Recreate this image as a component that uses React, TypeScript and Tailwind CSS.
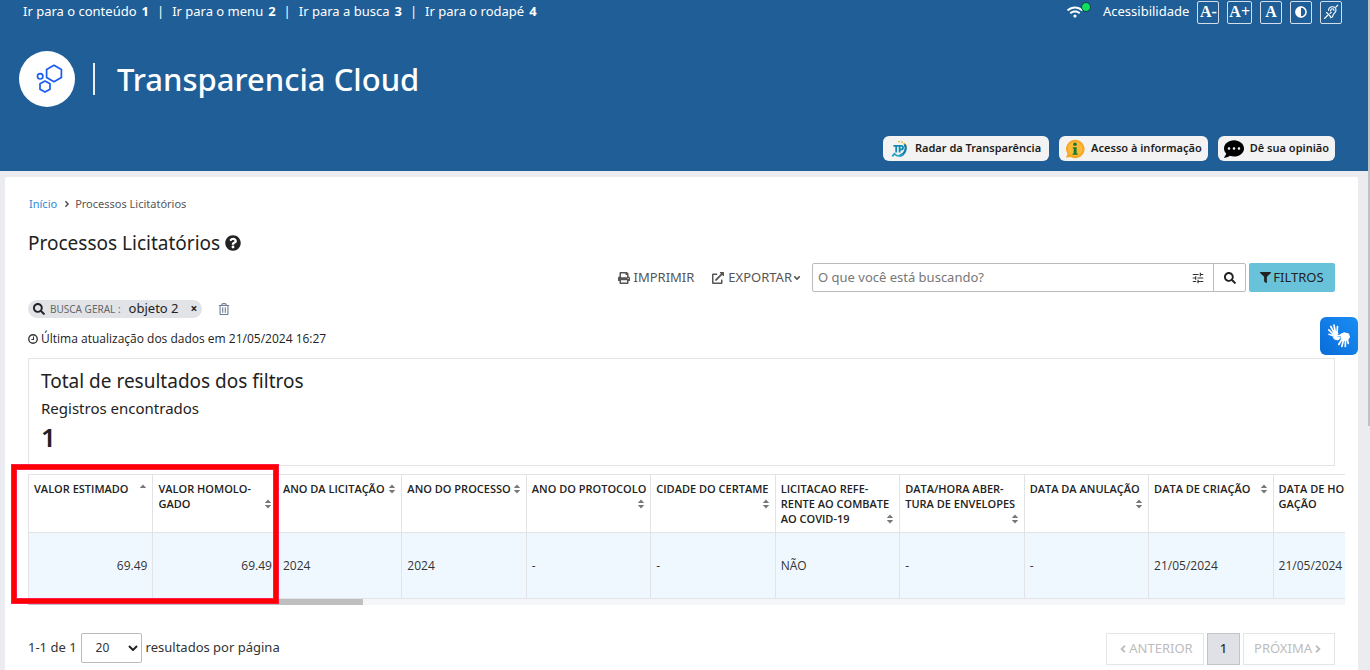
import {
  FaAdjust,
  FaAngleDown,
  FaAngleLeft,
  FaAngleRight,
  FaCommentDots,
  FaExternalLinkAlt,
  FaFilter,
  FaPrint,
  FaQuestionCircle,
  FaRegTrashAlt,
  FaSearch,
  FaWifi,
} from 'react-icons/fa'
import { MdTune } from 'react-icons/md'

const SKIP_LINKS = [
  { key: '1', label: 'Ir para o conteúdo' },
  { key: '2', label: 'Ir para o menu' },
  { key: '3', label: 'Ir para a busca' },
  { key: '4', label: 'Ir para o rodapé' },
]

type Column = { lines: string[]; value: string; numeric?: boolean; sorted?: boolean }

// an empty last line pushes the sort arrows below the label
const COLUMNS: Column[] = [
  { lines: ['VALOR ESTIMADO'], value: '69.49', numeric: true, sorted: true },
  { lines: ['VALOR HOMOLO-', 'GADO'], value: '69.49', numeric: true },
  { lines: ['ANO DA LICITAÇÃO'], value: '2024' },
  { lines: ['ANO DO PROCESSO'], value: '2024' },
  { lines: ['ANO DO PROTOCOLO', ''], value: '-' },
  { lines: ['CIDADE DO CERTAME', ''], value: '-' },
  { lines: ['LICITACAO REFE-', 'RENTE AO COMBATE', 'AO COVID-19'], value: 'NÃO' },
  { lines: ['DATA/HORA ABER-', 'TURA DE ENVELOPES', ''], value: '-' },
  { lines: ['DATA DA ANULAÇÃO', ''], value: '-' },
  { lines: ['DATA DE CRIAÇÃO'], value: '21/05/2024' },
  { lines: ['DATA DE HOMOLO-', 'GAÇÃO'], value: '21/05/2024' },
]

function SortIcon({ up }: { up?: boolean }) {
  return (
    <svg viewBox="0 0 8 10" className="h-[10px] w-2 shrink-0 fill-[#777]" aria-hidden="true">
      <path d="M4 .5 7.2 4H.8z" />
      {!up && <path d="M4 9.5.8 6h6.4z" />}
    </svg>
  )
}

function HexLogo() {
  return (
    <svg viewBox="0 0 56 56" className="size-14 shrink-0" fill="none" stroke="#1a5cf0" strokeWidth="1.7" strokeLinejoin="round">
      <circle cx="28" cy="28" r="28" fill="#fff" stroke="none" />
      <path d="M35 14.3 42.4 18.4V26.4L35 30.7 27.6 26.4V18.4z" />
      <path d="M26 30 31 32.7V38.2L26 41 21 38.2V32.7z" />
      <circle cx="21.2" cy="25.3" r="2.7" />
    </svg>
  )
}

function RadarIcon() {
  return (
    <svg viewBox="0 0 18 18" className="size-[18px] shrink-0" fill="none">
      <path d="M7 1.6a7.6 7.6 0 0 1 8.6 7" stroke="#e9b52b" strokeWidth="1.3" strokeDasharray="2 1" />
      <path d="M13.6 4.2c2.6 4.6.3 10.2-5.1 11.6" stroke="#157fa9" strokeWidth="2.2" />
      <path d="M12.4 14.4c-3 2-6.700 1.700-9-.6L1.200 16.400" stroke="#23a3c3" strokeWidth="1.8" />
      <path d="M2.4 5.8h5.4M5.2 6v6.4M8.6 12.4V5.9h1.6a1.7 1.7 0 0 1 0 3.6H8.8" stroke="#1489b4" strokeWidth="1.8" />
    </svg>
  )
}

function InfoIcon() {
  return (
    <svg viewBox="0 0 20 20" className="size-5 shrink-0">
      <path d="M10.3.8a9.2 9.2 0 1 1-4.7 17.1L1 18.8l1.5-3.9A9.2 9.2 0 0 1 10.3.8z" fill="#f7a823" />
      <circle cx="10.3" cy="9.8" r="7.2" fill="#fdb836" />
      <circle cx="10" cy="5.3" r="1.8" fill="#127a3b" />
      <path d="M7.8 8.2h3.8v6.2h1.2v1.4H7.6v-1.4h1.1V9.6h-.9z" fill="#127a3b" />
    </svg>
  )
}

function ClockIcon() {
  return (
    <svg viewBox="0 0 12 12" className="size-[10px] shrink-0" fill="none" stroke="#333" strokeWidth="1.6">
      <circle cx="6" cy="6" r="5.1" />
      <path d="M6.6 3v3.6H4" strokeWidth="1.3" />
    </svg>
  )
}

function HearingIcon() {
  return (
    <svg viewBox="0 0 16 16" className="size-4" fill="none" stroke="#fff" strokeWidth="1.1" strokeLinecap="round">
      <path d="M5.5 6.5C5.8 4 7.4 2.800 9.400 2.800c2.300 0 3.600 1.500 3.600 3.400 0 2.700-2.500 3-3 5.200-.3 1.500-1.200 2.300-2.600 2.300" />
      <path d="M7.6 7c0-1.400.8-2.200 1.800-2.200s1.600.8 1.600 1.600M1.500 14.500l3-3M13 3l1.800-1.800M3.500 8.500l4 4M7 9.500l1.200-1.200" />
    </svg>
  )
}

function HandsIcon() {
  return (
    <svg viewBox="0 0 38 38" className="size-full" fill="none" stroke="#fff" strokeLinecap="round" strokeLinejoin="round">
      <g strokeWidth="1.7">
        <path d="M13 17 8.8 12.8M14 15.5 10.8 9.5M15.3 15 14 8M17 16 17.5 9.5M12.5 18.5 9 17.3" />
        <path d="M22 22 18.8 27.5M23.5 23 21.8 29.5M25.5 23 25.3 29.5M27 21.5 28.3 26.5M22 18.5 16.8 18.8" />
      </g>
      <path d="M12.5 16.5 15.5 14.5 18.3 16.5 16.3 18.3 17 20.5 20.5 20.8 18 23 14.5 22z" fill="#fff" strokeWidth="1" />
      <path d="M20.5 17.5 24 15.8 28.5 16.8 29.5 20 27.5 23.5 22 23.5 21.5 20z" fill="#fff" strokeWidth="1" />
    </svg>
  )
}

function AccessButton({ label, children }: { label: string; children: React.ReactNode }) {
  return (
    <button
      aria-label={label}
      className="flex h-[23px] min-w-[22px] items-center justify-center rounded-xs border border-white/80 px-px font-['Liberation_Serif',serif] text-[16px] leading-none font-bold"
    >
      {children}
    </button>
  )
}

function Header() {
  return (
    <header className="h-[171px] bg-[#1f5e97] text-white">
      <div className="flex h-6 items-center justify-between pr-7 pl-[23px] text-[13px]">
        <nav className="flex items-center">
          {SKIP_LINKS.map((link, i) => (
            <span key={link.key} className="flex items-center">
              {i > 0 && <span className="mx-2">|</span>}
              <a href="#conteudo" className="flex gap-[5px]">
                {link.label} <b>{link.key}</b>
              </a>
            </span>
          ))}
        </nav>
        <div className="flex items-center gap-2">
          <span className="relative mr-3">
            <FaWifi className="size-4" />
            <span className="absolute -top-0.5 -right-2 size-[10px] rounded-full border border-[#123f4d] bg-[#11e05c]" />
          </span>
          <span>Acessibilidade</span>
          <AccessButton label="Diminuir fonte">A-</AccessButton>
          <AccessButton label="Aumentar fonte">A+</AccessButton>
          <AccessButton label="Fonte normal">A</AccessButton>
          <AccessButton label="Contraste">
            <FaAdjust className="size-3" />
          </AccessButton>
          <AccessButton label="Libras">
            <HearingIcon />
          </AccessButton>
        </div>
      </div>
      <div className="mt-[27px] flex items-center pl-[19px]">
        <HexLogo />
        <span className="mx-[18px] h-8 w-0.5 bg-white/90" />
        <h1 className="ml-1 text-[31px] leading-9 font-medium">Transparencia Cloud</h1>
      </div>
      <div className="mt-[29px] flex justify-end gap-[10px] pr-[35px] text-[11px] font-semibold text-[#1c1c1c]">
        <a href="#radar" className="flex h-[25px] items-center gap-[6px] rounded-md bg-[#f3f3f3] px-2">
          <RadarIcon />
          Radar da Transparência
        </a>
        <a href="#acesso" className="flex h-[25px] items-center gap-[6px] rounded-md bg-[#f3f3f3] px-[6px]">
          <InfoIcon />
          Acesso à informação
        </a>
        <a href="#opiniao" className="flex h-[25px] items-center gap-[6px] rounded-md bg-[#f3f3f3] px-[6px]">
          <FaCommentDots className="size-5 text-black" />
          Dê sua opinião
        </a>
      </div>
    </header>
  )
}

function Toolbar() {
  return (
    <div className="flex h-[29px] items-center justify-end text-[13px] text-[#555]">
      <button className="flex items-center gap-[3px]">
        <FaPrint className="size-3" />
        IMPRIMIR
      </button>
      <button className="ml-[18px] flex items-center gap-1">
        <FaExternalLinkAlt className="size-3" />
        <span className="flex items-center">
          EXPORTAR
          <FaAngleDown className="size-[10px]" />
        </span>
      </button>
      <form className="ml-[10px] flex h-full w-[434px] rounded-xs border border-[#bbb]" onSubmit={(e) => e.preventDefault()}>
        <input
          aria-label="Buscar"
          placeholder="O que você está buscando?"
          className="min-w-0 flex-1 px-[5px] outline-none placeholder:text-[#777]"
        />
        <button type="button" aria-label="Opções de busca" className="px-2">
          <MdTune className="size-[14px] text-[#333]" />
        </button>
        <button aria-label="Pesquisar" className="flex w-8 items-center justify-center border-l border-[#bbb]">
          <FaSearch className="size-3 text-[#222]" />
        </button>
      </form>
      <button className="ml-[3px] flex h-full w-[86px] items-center justify-center gap-[2px] rounded-xs bg-[#68c3da] text-[#222]">
        <FaFilter className="size-[11px]" />
        FILTROS
      </button>
    </div>
  )
}

function ResultsTable() {
  return (
    <div className="relative mt-2 -mr-[10px] font-['Open_Sans',sans-serif]">
      <div className="overflow-hidden">
        <table className="w-[1370px] table-fixed border-collapse border border-[#e2e3e6]">
          <thead>
            <tr className="h-[58px]">
              {COLUMNS.map((col) => (
                <th
                  key={col.lines.join('')}
                  className="border border-[#e2e3e6] px-[5px] pt-[6px] text-left align-top text-[11px] leading-[15px] font-semibold text-[#222]"
                >
                  {col.lines.map((line, i) => (
                    <span key={i} className="flex h-[15px] items-center justify-between whitespace-nowrap">
                      {line}
                      {i === col.lines.length - 1 && (
                        <span className="ml-auto">
                          <SortIcon up={col.sorted} />
                        </span>
                      )}
                    </span>
                  ))}
                </th>
              ))}
            </tr>
          </thead>
          <tbody>
            <tr className="h-[66px] bg-[#f0f8ff] text-[12px] text-[#333]">
              {COLUMNS.map((col) => (
                <td
                  key={col.lines.join('')}
                  className={`border border-[#e2e3e6] px-[5px] ${col.numeric ? 'text-right' : 'text-left'}`}
                >
                  {col.value}
                </td>
              ))}
            </tr>
          </tbody>
        </table>
      </div>
      <div className="h-[6px] bg-[#f5f6fa]">
        <div className="h-full w-[335px] bg-[#bfbfbf]" />
      </div>
      <div className="pointer-events-none absolute -top-[9px] -left-4 h-[138px] w-[266px] border-4 border-[#ff0000] shadow-[0_0_0_1px_#ff1a47,inset_0_0_0_1px_#ff1a47]" />
    </div>
  )
}

function Pagination() {
  return (
    <div className="mt-7 flex items-start justify-between text-[13px] text-[#333]">
      <div className="flex items-center gap-1">
        <label htmlFor="page-size">1-1 de 1</label>
        <span className="relative">
          <select
            id="page-size"
            defaultValue="20"
            className="h-[30px] w-[61px] appearance-none rounded-xs border border-[#bbb] bg-white pl-[14px] text-[12px]"
          >
            <option>20</option>
            <option>50</option>
          </select>
          <svg viewBox="0 0 10 6" className="pointer-events-none absolute top-3 right-1 h-[6px] w-[10px]" fill="none" stroke="#222" strokeWidth="2">
            <path d="M1 1l4 4 4-4" />
          </svg>
        </span>
        <span>resultados por página</span>
      </div>
      <div className="flex gap-[3px]">
        <button disabled className="flex h-8 w-[98px] items-center justify-center border border-[#e5e5e5] text-[#bdbdbd]">
          <FaAngleLeft className="size-3" />
          ANTERIOR
        </button>
        <button className="h-8 w-[33px] border border-[#c3c4c7] bg-[#e0e1e6] font-medium">1</button>
        <button disabled className="flex h-8 w-[92px] items-center justify-center border border-[#e5e5e5] text-[#bdbdbd]">
          PRÓXIMA
          <FaAngleRight className="size-3" />
        </button>
      </div>
    </div>
  )
}

export default function App() {
  return (
    <div className="relative h-screen overflow-hidden bg-[#ebecf0] font-['Noto_Sans',sans-serif] text-[#222]">
      <Header />
      <main id="conteudo" className="mt-[6px] mr-3 ml-[5px] rounded-xs bg-white px-[23px] pt-[18px] pb-8">
        <nav className="flex items-center gap-[3px] pl-px text-[11px] leading-[18px] text-[#555]">
          <a href="#inicio" className="text-[#2f86d1]">
            Início
          </a>
          <FaAngleRight className="ml-0.5 size-[10px]" />
          <span>Processos Licitatórios</span>
        </nav>
        <h2 className="mt-[18px] flex items-center gap-[5px] text-[19px] leading-6">
          Processos Licitatórios
          <FaQuestionCircle className="size-4" />
        </h2>
        <div className="mt-2">
          <Toolbar />
        </div>
        <div className="mt-2 flex items-center gap-4">
          <span className="flex h-[18px] items-center rounded-full bg-[#e2e3e7] px-[5px]">
            <FaSearch className="size-3" />
            <span className="ml-[5px] text-[10px] text-[#666]">BUSCA GERAL :</span>
            <span className="ml-2 text-[13px]">objeto 2</span>
            <button aria-label="Remover filtro" className="ml-3 text-[12px] leading-none font-bold">
              ×
            </button>
          </span>
          <button aria-label="Limpar filtros">
            <FaRegTrashAlt className="size-3 text-[#6f7f96]" />
          </button>
        </div>
        <p className="mt-3 flex items-center gap-[3px] font-['Open_Sans',sans-serif] text-[12px] leading-[18px]">
          <ClockIcon />
          Última atualização dos dados em 21/05/2024 16:27
        </p>
        <section className="mt-[10px] h-[108px] border border-[#e4e4e4] px-3 pt-[10px]">
          <h3 className="text-[19px] leading-6">Total de resultados dos filtros</h3>
          <p className="mt-[5px] text-[15px] leading-5">Registros encontrados</p>
          <p className="mt-[3px] text-[26px] leading-8 font-semibold">1</p>
        </section>
        <ResultsTable />
        <Pagination />
      </main>
      <button
        aria-label="Conteúdo acessível em Libras"
        className="absolute top-[317px] right-3 size-[38px] rounded-md bg-linear-to-tr from-[#0a6cd8] to-[#1a8df5]"
      >
        <HandsIcon />
      </button>
      <div className="absolute top-0 right-0 h-[426px] w-0.5 bg-[#c1c1c1]" />
    </div>
  )
}
